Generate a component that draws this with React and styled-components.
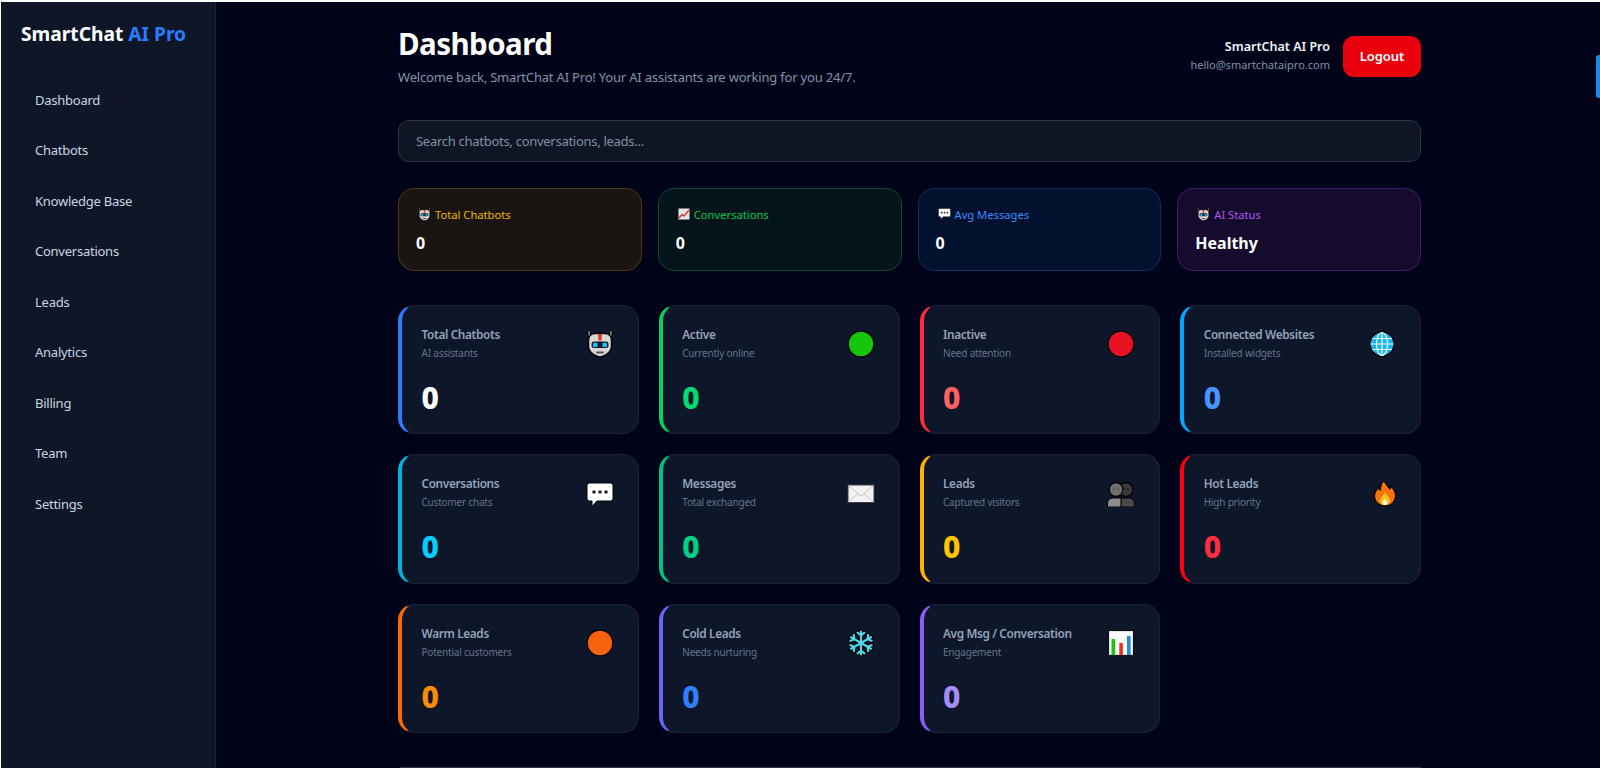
import React from "react";
import styled, { createGlobalStyle } from "styled-components";

const GlobalStyle = createGlobalStyle`
  html, body {
    margin: 0;
    padding: 0;
    height: 100%;
    background: #ffffff;
    overflow: hidden;
  }
  body {
    font-family: "Noto Sans", "Open Sans", "Liberation Sans", sans-serif;
  }
  * {
    box-sizing: border-box;
  }
`;

const Page = styled.div`
  height: 100vh;
  padding: 2px 0 0 1px;
  display: flex;
  overflow: hidden;
  position: relative;
`;
const Sidebar = styled.aside`
  width: 215px;
  flex-shrink: 0;
  background: #0e1628;
  border-right: 1px solid #1c2537;
  padding: 20px 20px 0;
`;
const Logo = styled.div`
  font-size: 19.2px;
  font-weight: 700;
  line-height: 24px;
  color: #ffffff;
  margin-bottom: 28.5px;
  white-space: nowrap;
  span {
    color: #2a7bff;
  }
`;
const Nav = styled.nav`
  display: flex;
  flex-direction: column;
`;
const NavItem = styled.a`
  height: 50.5px;
  display: flex;
  align-items: center;
  padding-left: 14px;
  font-size: 13px;
  letter-spacing: -0.25px;
  color: #cbd5e1;
`;
const Main = styled.main`
  flex: 1;
  background: #010418;
  padding: 22px 0 0 182px;
  min-width: 0;
`;
const Content = styled.div`
  width: 1023px;
`;
const Header = styled.header`
  display: flex;
  justify-content: space-between;
  align-items: flex-start;
`;
const Title = styled.h1`
  margin: 0;
  font-size: 29.5px;
  line-height: 40px;
  font-weight: 700;
  letter-spacing: -0.55px;
  color: #ffffff;
`;
const Subtitle = styled.p`
  margin: 3px 0 0;
  font-size: 13px;
  line-height: 20px;
  letter-spacing: -0.19px;
  color: #8394a8;
`;
const UserBox = styled.div`
  display: flex;
  align-items: center;
  gap: 13px;
  padding-top: 11.5px;
`;
const UserText = styled.div`
  text-align: right;
`;
const UserName = styled.div`
  font-size: 12.5px;
  line-height: 18px;
  font-weight: 600;
  color: #f1f5f9;
`;
const UserMail = styled.div`
  font-size: 11px;
  line-height: 18px;
  color: #7f90a6;
`;
const LogoutButton = styled.button`
  width: 78px;
  height: 41px;
  border: none;
  border-radius: 11px;
  background: #ea000d;
  color: #ffffff;
  font-family: inherit;
  font-size: 13px;
  font-weight: 600;
  letter-spacing: -0.1px;
`;
const Search = styled.input`
  display: block;
  width: 100%;
  height: 42px;
  margin-top: 32.5px;
  padding: 0 17px;
  border-radius: 11px;
  border: 1px solid #2a3546;
  background: #0e1626;
  font-family: inherit;
  font-size: 13px;
  letter-spacing: -0.28px;
  color: #ffffff;
  outline: none;
  &::placeholder {
    color: #8290a3;
    opacity: 1;
  }
`;
const StatRow = styled.section`
  display: grid;
  grid-template-columns: repeat(4, 1fr);
  gap: 16px;
  margin-top: 26.5px;
`;
const StatCard = styled.div`
  height: 82.5px;
  padding: 17px 17px 0;
  border-radius: 16px;
  border: 1px solid ${({ $border }) => $border};
  background: ${({ $bg }) => $bg};
`;
const StatLabel = styled.div`
  display: flex;
  align-items: center;
  gap: 4px;
  height: 16px;
  padding-left: 2px;
  font-size: 11.2px;
  color: ${({ $color }) => $color};
`;
const StatValue = styled.div`
  margin-top: 8px;
  font-size: 16px;
  line-height: 26px;
  font-weight: 700;
  color: #ffffff;
`;
const MetricGrid = styled.section`
  display: grid;
  grid-template-columns: repeat(4, 1fr);
  gap: 20px;
  margin-top: 34px;
`;
const MetricCard = styled.div`
  height: 129.5px;
  padding: 19px 24px 0 19.5px;
  border-radius: 16px;
  border: 1px solid #1b2436;
  border-left: 4px solid ${({ $accent }) => $accent};
  background: #0e162a;
`;
const MetricTop = styled.div`
  display: flex;
  justify-content: space-between;
  align-items: flex-start;
`;
const MetricIcon = styled.div`
  margin-top: 5px;
  line-height: 0;
`;
const MetricTitle = styled.div`
  font-size: 11.8px;
  line-height: 18px;
  font-weight: 600;
  letter-spacing: -0.35px;
  color: #94a3b8;
`;
const MetricSub = styled.div`
  margin-top: 2px;
  font-size: 10px;
  line-height: 16px;
  letter-spacing: -0.2px;
  color: #64748b;
`;
const MetricValue = styled.div`
  margin-top: 17px;
  font-size: 30px;
  line-height: 40px;
  font-weight: 800;
  color: ${({ $color }) => $color};
`;
const Divider = styled.div`
  margin: 34px 0 0 2px;
  border-top: 1px solid #2a3546;
`;
const SideTab = styled.div`
  position: absolute;
  right: 0;
  top: 55px;
  width: 4px;
  height: 43px;
  border-radius: 3px 0 0 3px;
  background: #1e88e5;
`;

const RobotIcon = ({ size = 28 }) => (
  <svg width={size} height={size} viewBox="0 0 28 28">
    <path d="M3 1.500 4 10M25 1.500 24 10" stroke="#000" strokeWidth="3" strokeLinecap="round" />
    <path d="M3 1.500 4 10M25 1.500 24 10" stroke="#9a9a9a" strokeWidth="1.400" strokeLinecap="round" />
    <path d="M9 3.500h10c4 0 6.500 3 6.500 7v6c0 3-1.500 5-4 7-2 2-4.500 3.500-7.500 3.500s-5.500-1.500-7.500-3.500c-2.500-2-4-4-4-7v-6c0-4 2.500-7 6.500-7z" fill="#d8d8d8" stroke="#000" strokeWidth="1.500" />
    <rect x="12.300" y="4.200" width="3.400" height="6.300" fill="#e2352b" />
    <rect x="5.500" y="11.500" width="17" height="6.500" rx="2.500" fill="#161c26" />
    <rect x="7" y="12.700" width="4.500" height="4.200" rx="1" fill="#22c4f6" />
    <rect x="16.500" y="12.700" width="4.500" height="4.200" rx="1" fill="#22c4f6" />
    <rect x="10" y="21.500" width="8" height="2" rx="1" fill="#555" />
  </svg>
);

const DotIcon = ({ color }) => (
  <svg width="28" height="28" viewBox="0 0 28 28">
    <circle cx="14" cy="14" r="12.800" fill={color} stroke="#000" strokeWidth="1.200" />
  </svg>
);

const GlobeIcon = () => (
  <svg width="28" height="28" viewBox="0 0 28 28">
    <circle cx="14" cy="14" r="12" fill="#1fb4f0" stroke="#000" strokeWidth="1.300" />
    <g fill="none" stroke="#e4f8ff" strokeWidth="1.200">
      <ellipse cx="14" cy="14" rx="5.500" ry="11.500" />
      <path d="M14 2.500v23M2.500 14h23M4 8.500h20M4 19.500h20" />
    </g>
  </svg>
);

const BubbleIcon = ({ size = 28, top = 0 }) => (
  <svg width={size} height={size} viewBox={`0 ${top} 28 28`}>
    <path d="M3.500 1h21a2.500 2.500 0 0 1 2.500 2.500v13a2.500 2.500 0 0 1-2.500 2.500H11l-5 5.500V19H3.500A2.500 2.500 0 0 1 1 16.500v-13A2.500 2.500 0 0 1 3.500 1z" fill="#fff" stroke="#000" strokeWidth="1" />
    <circle cx="8" cy="10" r="1.800" fill="#222" />
    <circle cx="14" cy="10" r="1.800" fill="#222" />
    <circle cx="20" cy="10" r="1.800" fill="#222" />
  </svg>
);

const MailIcon = () => (
  <svg width="28" height="28" viewBox="0 -4 28 28">
    <rect x="1" y="2" width="26" height="17.500" fill="#f2f2f2" stroke="#3a3a3a" strokeWidth="1" />
    <path d="M1.500 2.500 14 13 26.500 2.500M1.500 19 11 10.500M26.500 19 17 10.500" fill="none" stroke="#c4c4c4" strokeWidth="1" />
  </svg>
);

const BustsIcon = () => (
  <svg width="28" height="28" viewBox="0 -2 28 28">
    <circle cx="19" cy="8.500" r="6.800" fill="#3a3a3a" stroke="#000" strokeWidth="1.200" />
    <circle cx="9" cy="8.500" r="6.800" fill="#6e6e6e" stroke="#000" strokeWidth="1.200" />
    <path d="M14 26H27.500v-4c0-3-2.500-5-5.500-5H14z" fill="#4a4a4a" stroke="#000" strokeWidth="1" />
    <path d="M14 26H.500v-4c0-3 2.500-5 5.500-5h8z" fill="#8c8c8c" stroke="#000" strokeWidth="1" />
    <circle cx="7" cy="8" r=".7" fill="#333" />
    <circle cx="11" cy="8" r=".7" fill="#333" />
    <circle cx="17.500" cy="8" r=".7" fill="#111" />
    <circle cx="21" cy="8" r=".7" fill="#111" />
  </svg>
);

const FireIcon = () => (
  <svg width="22" height="28" viewBox="3 0 22 28">
    <path d="M13 1c1 5 4 6 6 9 1-1 1-2 1-3 3 3 4.500 6 4.500 10 0 6-4.500 10-10.500 10S3.500 23 3.500 17c0-4 2-6 4-9 0 2 1 3 2 3 0-4 1-7 3.500-10z" fill="#f7730c" stroke="#000" strokeWidth="1.100" />
    <path d="M14 13c1 3 5 5 5 9 0 2-2 4-5 4s-5-2-5-4c0-3 3-5 5-9z" fill="#fcc21b" />
    <path d="M14 20c1 1 2.500 2 2.500 3.500S15.500 26 14 26s-2.500-1-2.500-2.500S13 21 14 20z" fill="#fff6dc" />
  </svg>
);

const SnowIcon = () => {
  const arm = "M14 14V2.500M14 6.500l-3.400-2.800M14 6.500l3.400-2.800";
  return (
    <svg width="28" height="28" viewBox="0 0 28 28">
      {[0, 60, 120, 180, 240, 300].map((deg) => (
        <path key={deg} d={arm} transform={`rotate(${deg} 14 14)`} fill="none" stroke="#000" strokeWidth="4.400" strokeLinecap="round" />
      ))}
      {[0, 60, 120, 180, 240, 300].map((deg) => (
        <path key={deg} d={arm} transform={`rotate(${deg} 14 14)`} fill="none" stroke="#4fd8ea" strokeWidth="2.200" strokeLinecap="round" />
      ))}
    </svg>
  );
};

const BarsIcon = () => (
  <svg width="28" height="28" viewBox="0 0 28 28">
    <rect x="1.500" y="1.500" width="25" height="25" fill="#fbfbfb" stroke="#111" strokeWidth="1.200" />
    <rect x="4.500" y="10" width="3.600" height="16" fill="#16c60c" />
    <rect x="12.300" y="14" width="3.600" height="12" fill="#e8321f" />
    <rect x="20" y="7" width="3.600" height="19" fill="#1e88e5" />
  </svg>
);

const TrendIcon = () => (
  <svg width="12" height="12" viewBox="0 0 12 12">
    <rect x="0.500" y="0.500" width="11" height="11" fill="#e6e6e6" />
    <path d="M1 10 4 6.500 6 8l5-6" fill="none" stroke="#e0392b" strokeWidth="1.400" />
  </svg>
);

const stats = [
  { icon: <RobotIcon size={13} />, label: "Total Chatbots", value: "0", color: "#f0b400", bg: "#1a1512", border: "#523810" },
  { icon: <TrendIcon />, label: "Conversations", value: "0", color: "#00c853", bg: "#03141a", border: "#0b4a2e" },
  { icon: <BubbleIcon size={13} />, label: "Avg Messages", value: "0", color: "#3b8bff", bg: "#01112e", border: "#0e2f60" },
  { icon: <RobotIcon size={13} />, label: "AI Status", value: "Healthy", color: "#b455f0", bg: "#150b2c", border: "#3d1c70" },
];

const metrics = [
  { title: "Total Chatbots", sub: "AI assistants", icon: <RobotIcon />, accent: "#2f7bff", color: "#ffffff" },
  { title: "Active", sub: "Currently online", icon: <DotIcon color="#16c60c" />, accent: "#00d45a", color: "#00dc70" },
  { title: "Inactive", sub: "Need attention", icon: <DotIcon color="#e81224" />, accent: "#ff2d3d", color: "#ff6060" },
  { title: "Connected Websites", sub: "Installed widgets", icon: <GlobeIcon />, accent: "#00a8ff", color: "#4a94ff" },
  { title: "Conversations", sub: "Customer chats", icon: <BubbleIcon top={-3} />, accent: "#00b4d8", color: "#00cfff" },
  { title: "Messages", sub: "Total exchanged", icon: <MailIcon />, accent: "#00c27a", color: "#00d084" },
  { title: "Leads", sub: "Captured visitors", icon: <BustsIcon />, accent: "#ffb300", color: "#ffc400" },
  { title: "Hot Leads", sub: "High priority", icon: <FireIcon />, accent: "#ff0010", color: "#ff2d3d" },
  { title: "Warm Leads", sub: "Potential customers", icon: <DotIcon color="#f7630c" />, accent: "#ff6a00", color: "#ff8c00" },
  { title: "Cold Leads", sub: "Needs nurturing", icon: <SnowIcon />, accent: "#6366f1", color: "#2f7fff" },
  { title: "Avg Msg / Conversation", sub: "Engagement", icon: <BarsIcon />, accent: "#8b5cf6", color: "#a78bfa" },
];

const navItems = ["Dashboard", "Chatbots", "Knowledge Base", "Conversations", "Leads", "Analytics", "Billing", "Team", "Settings"];

const App = () => {
  return (
    <>
      <GlobalStyle />
      <Page>
        <Sidebar>
          <Logo>
            SmartChat <span>AI Pro</span>
          </Logo>
          <Nav>
            {navItems.map((item) => (
              <NavItem key={item}>{item}</NavItem>
            ))}
          </Nav>
        </Sidebar>
        <Main>
          <Content>
            <Header>
              <div>
                <Title>Dashboard</Title>
                <Subtitle>Welcome back, SmartChat AI Pro! Your AI assistants are working for you 24/7.</Subtitle>
              </div>
              <UserBox>
                <UserText>
                  <UserName>SmartChat AI Pro</UserName>
                  <UserMail>hello@smartchataipro.com</UserMail>
                </UserText>
                <LogoutButton>Logout</LogoutButton>
              </UserBox>
            </Header>
            <Search placeholder="Search chatbots, conversations, leads..." />
            <StatRow>
              {stats.map((stat) => (
                <StatCard key={stat.label} $bg={stat.bg} $border={stat.border}>
                  <StatLabel $color={stat.color}>
                    {stat.icon}
                    {stat.label}
                  </StatLabel>
                  <StatValue>{stat.value}</StatValue>
                </StatCard>
              ))}
            </StatRow>
            <MetricGrid>
              {metrics.map((metric) => (
                <MetricCard key={metric.title} $accent={metric.accent}>
                  <MetricTop>
                    <div>
                      <MetricTitle>{metric.title}</MetricTitle>
                      <MetricSub>{metric.sub}</MetricSub>
                    </div>
                    <MetricIcon>{metric.icon}</MetricIcon>
                  </MetricTop>
                  <MetricValue $color={metric.color}>0</MetricValue>
                </MetricCard>
              ))}
            </MetricGrid>
            <Divider />
          </Content>
        </Main>
        <SideTab />
      </Page>
    </>
  );
};

export default App;
